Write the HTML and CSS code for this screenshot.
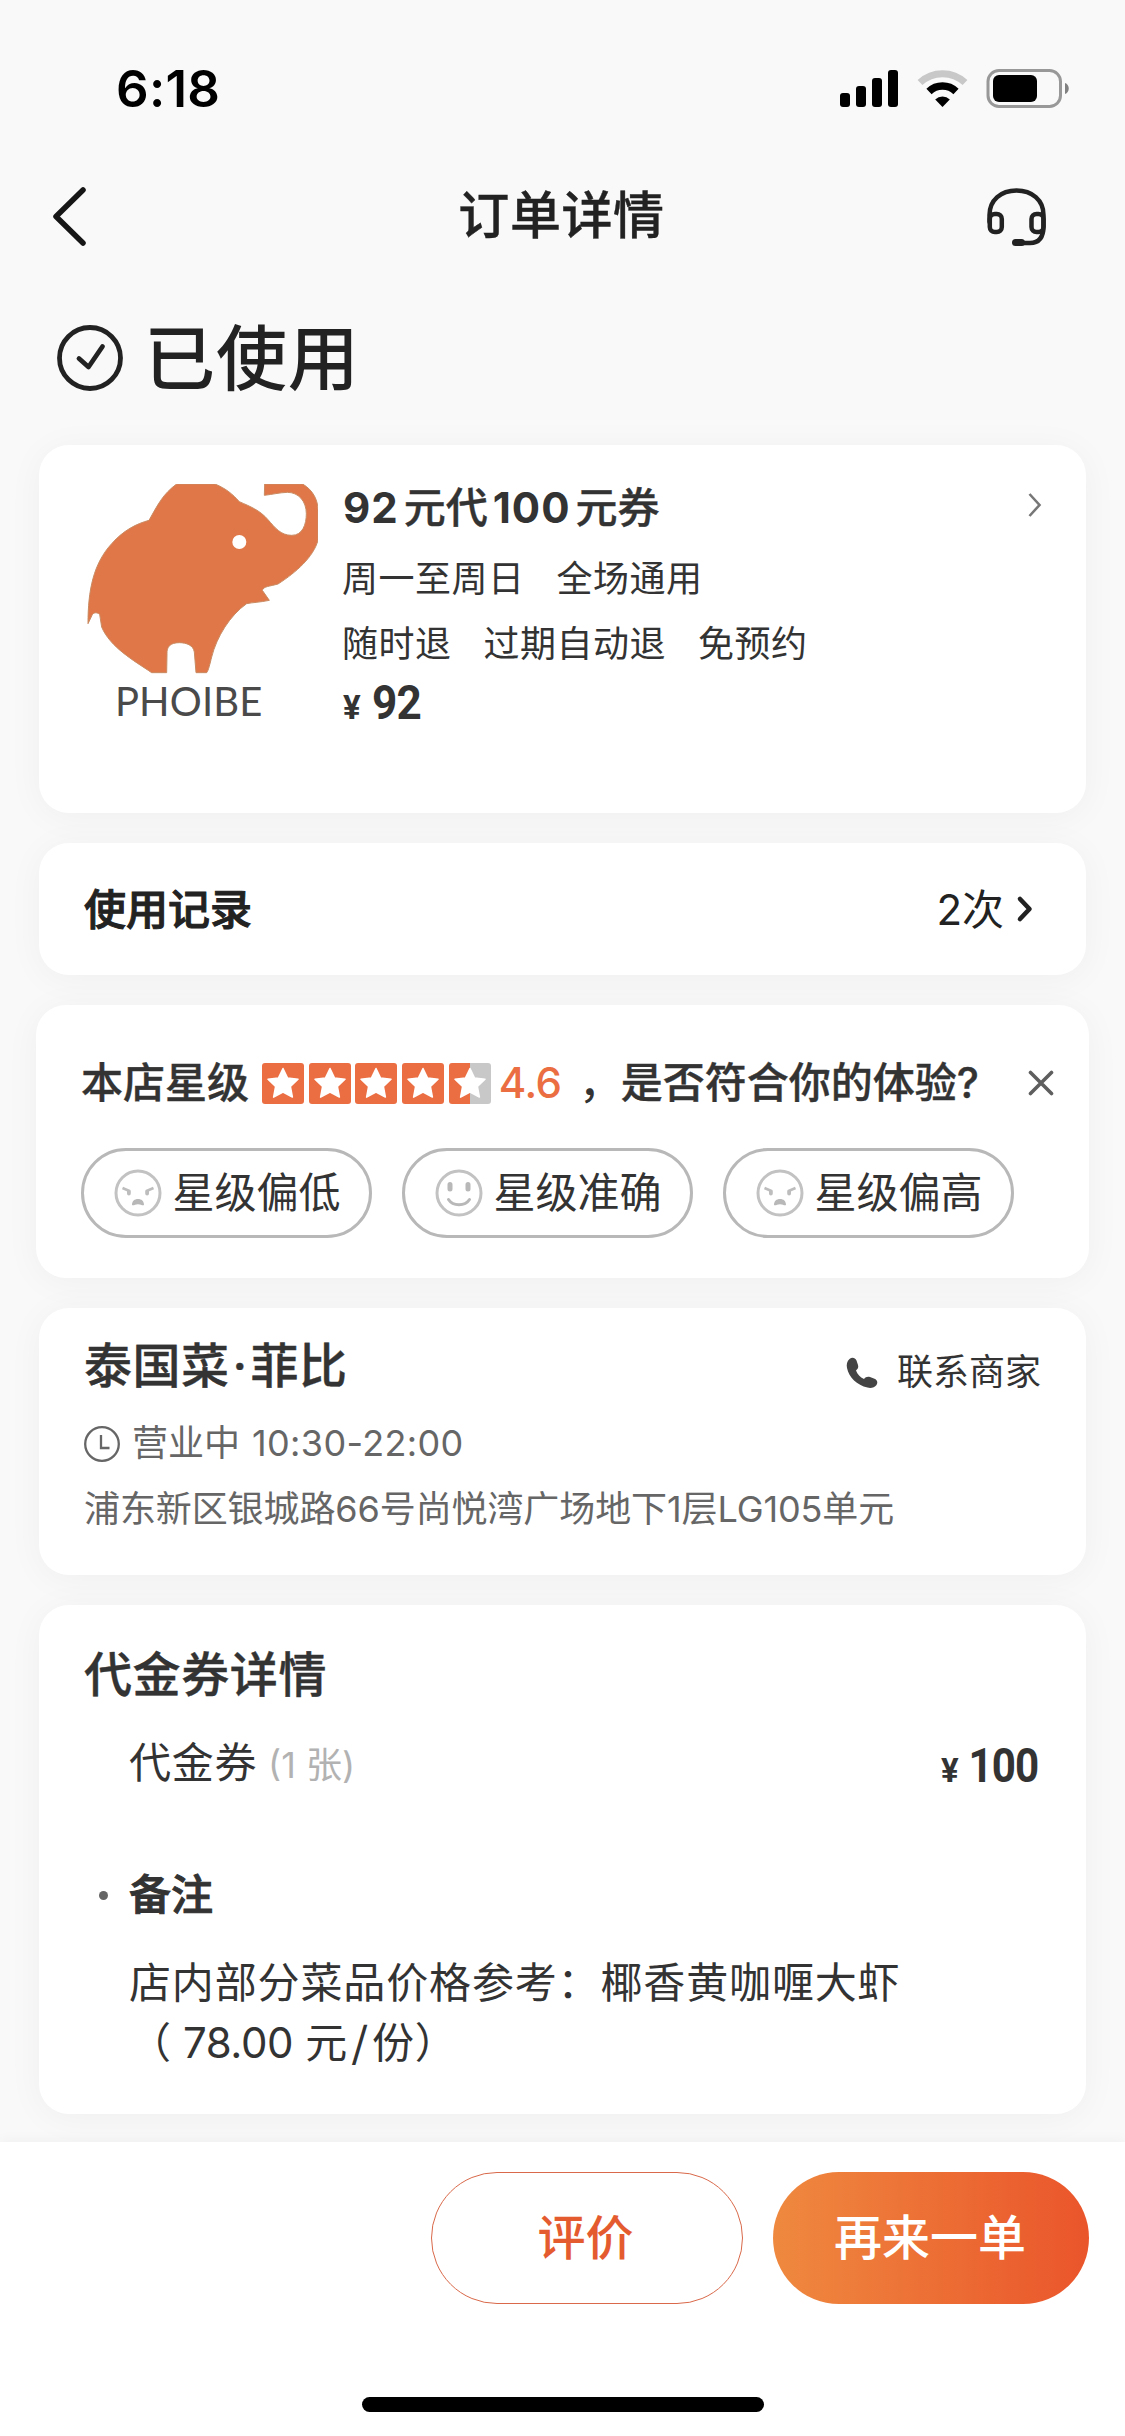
FILE: index.html
```html
<!DOCTYPE html>
<html lang="zh-CN">
<head>
<meta charset="utf-8">
<title>订单详情</title>
<link rel="stylesheet" href="styles.css">
</head>
<body>
<svg class="defs" width="0" height="0">
  <symbol id="star" viewBox="0 0 42 41"><path fill="#fff" stroke="#fff" stroke-width="1.5" stroke-linejoin="round" d="M21 5.500l4.600 9.600 10.400 1.200-7.600 7.200 2 10.600L21 29l-9.400 5.100 2-10.600L6 16.300l10.400-1.200z"/></symbol>
  <symbol id="sad" viewBox="0 0 48 48">
    <circle cx="24" cy="24" r="22" fill="none" stroke="#c2c2c2" stroke-width="3"/>
    <path d="M8.500 19l7.500 3.200M39.500 19L32 22.200" stroke="#bdbdbd" stroke-width="2.600" fill="none"/>
    <path d="M13 21.500h3.800v3a1.900 1.900 0 0 1-3.800 0zM31.200 21.500H35v3a1.900 1.900 0 0 1-3.800 0z" fill="#bdbdbd"/>
    <path d="M18 36c0-4 2.500-6 6-6s6 2 6 6c-1.500 1-3-.8-6-.8s-4.500 1.800-6 .8z" fill="#b8b8b8"/>
  </symbol>
  <symbol id="smile" viewBox="0 0 48 48">
    <circle cx="24" cy="24" r="22" fill="none" stroke="#c2c2c2" stroke-width="3"/>
    <path d="M15 15.500v4.500M33 15.500v4.500" stroke="#b8b8b8" stroke-width="5" stroke-linecap="round"/>
    <path d="M13.500 30.500c4.500 7 16.500 7 21 0" fill="none" stroke="#b8b8b8" stroke-width="3" stroke-linecap="round"/>
  </symbol>
</svg>

<header class="status">
  <div class="clock">6:18</div>
  <svg class="status-icons" width="230" height="40" viewBox="0 0 230 40">
    <rect x="0" y="25" width="10" height="14" rx="3"/><rect x="16" y="18" width="10" height="21" rx="3"/>
    <rect x="32" y="10" width="10" height="29" rx="3"/><rect x="48" y="2" width="10" height="37" rx="3"/>
    <path d="M80 14.500a33 33 0 0 1 45 0" fill="none" stroke="#c8c8c8" stroke-width="7"/>
    <path d="M89 23.500a19.500 19.500 0 0 1 27 0" fill="none" stroke="#000" stroke-width="7.500"/>
    <path d="M102.500 39l-7.300-7.600a10.500 10.500 0 0 1 14.600 0z"/>
    <rect x="148" y="2.500" width="72.500" height="36" rx="11" fill="none" stroke="#989898" stroke-width="3"/>
    <rect x="153" y="7" width="44" height="27" rx="6"/>
    <path d="M225 15c5 1.500 5 9.500 0 11z" fill="#808080"/>
  </svg>
</header>

<nav class="navbar">
  <svg width="36" height="60" viewBox="0 0 36 60"><path d="M33 4L6 30.500 33 57" fill="none" stroke="#161616" stroke-width="5.500" stroke-linecap="round" stroke-linejoin="round"/></svg>
  <h1>订单详情</h1>
  <svg width="60" height="60" viewBox="0 0 60 60" fill="none" stroke="#222" stroke-width="4.500" stroke-linecap="round">
    <path d="M2.500 36V29C2.500 14 14 4.500 29.500 4.500S56.500 14 56.500 29v11C56.500 51 52 57 43 57H30"/>
    <rect x="2.800" y="28" width="12" height="18" rx="5"/>
    <rect x="44.500" y="28" width="12" height="18" rx="5"/>
    <path d="M28.500 56.500h6" stroke-width="7"/>
  </svg>
</nav>

<section class="state">
  <svg width="68" height="68" viewBox="0 0 68 68" fill="none" stroke="#222" stroke-width="4.800" stroke-linecap="round" stroke-linejoin="round"><circle cx="34" cy="34" r="30.500"/><path d="M23 34.500L32.500 43 46.500 22.500"/></svg>
  <h2>已使用</h2>
</section>

<main>
  <section class="card deal">
    <div class="logo">
      <svg width="234" height="190" viewBox="162 161 702 570">
        <path fill="#e07748" stroke="#c98b62" stroke-width="3" d="M440 161H555C590 176 606 190 628 214C660 228 690 240 714 268C735 292 752 315 785 315C818 315 829 282 829 250C829 212 805 186 772 186C748 187 728 192 703 195L704 161H818C850 180 864 210 864 240V330C850 380 800 425 744 461C720 468 700 468 697 480L718 510C690 516 670 516 650 520C600 555 560 620 545 680C540 700 535 722 530 727H498L493 665C490 645 470 637 448 637C420 637 410 650 411 670L410 727H365C310 690 240 650 215 590L209 552C200 545 190 546 186 555L174 580C174 480 190 400 245 340C280 300 320 280 357 270C385 220 400 190 440 161Z"/>
        <circle cx="628" cy="335" r="21" fill="#fff"/>
      </svg>
      <div class="logo-name">PHOIBE</div>
    </div>
    <div class="deal-info">
      <h3><b>92</b>元代<b>100</b>元券</h3>
      <p><span>周一至周日</span><span>全场通用</span></p>
      <p><span>随时退</span><span>过期自动退</span><span>免预约</span></p>
      <div class="price"><i>¥</i><span>92</span></div>
    </div>
    <svg class="deal-arrow" width="14" height="28" viewBox="0 0 14 28"><path d="M1.500 3L11.500 14 1.500 25" fill="none" stroke="#777" stroke-width="2.600"/></svg>
  </section>

  <section class="card usage">
    <h3>使用记录</h3>
    <span>2次</span>
    <svg width="18" height="28" viewBox="0 0 18 28"><path d="M4 4L13.500 14 4 24" fill="none" stroke="#222" stroke-width="4.600" stroke-linecap="round" stroke-linejoin="round"/></svg>
  </section>

  <section class="card rating">
    <div class="rating-head">
      <h3>本店星级</h3>
      <div class="stars">
        <svg><use href="#star"/></svg><svg><use href="#star"/></svg><svg><use href="#star"/></svg><svg><use href="#star"/></svg><svg class="half"><use href="#star"/></svg>
      </div>
      <span class="score">4.6</span>
      <span class="comma">，</span>
      <h3>是否符合你的体验?</h3>
      <svg class="close" width="26" height="26" viewBox="0 0 26 26"><path d="M2.500 2.500l21 21M23.500 2.500l-21 21" stroke="#5e5e5e" stroke-width="3.600" stroke-linecap="round"/></svg>
    </div>
    <div class="pills">
      <button><svg><use href="#sad"/></svg>星级偏低</button>
      <button><svg><use href="#smile"/></svg>星级准确</button>
      <button><svg><use href="#sad"/></svg>星级偏高</button>
    </div>
  </section>

  <section class="card shop">
    <div class="shop-head">
      <h3>泰国菜<em>·</em>菲比</h3>
      <a><svg width="32" height="32" viewBox="0 0 32 32"><path fill="#444" d="M3.500 2C6 0 9 .5 10.500 3.500L12 8c.8 2.500-.3 4-2 5.500 1.500 4 4 6.500 8 8.500 1.500-2 3.500-2.700 6-2l4.500 1.800c3 1.500 3.500 4 2 6.200-2 2.600-5.500 3.500-9 2.600C11 28 3 20.500 1 11 .3 7.500 1 4 3.500 2z"/></svg>联系商家</a>
    </div>
    <div class="hours">
      <svg width="38" height="38" viewBox="0 0 38 38" fill="none" stroke="#666" stroke-width="2.300"><circle cx="19" cy="19" r="16.800"/><path d="M18 10v13h8.500"/></svg>
      <span>营业中</span><span>10:30-22:00</span>
    </div>
    <p>浦东新区银城路66号尚悦湾广场地下1层LG105单元</p>
  </section>

  <section class="card voucher">
    <h3>代金券详情</h3>
    <div class="line"><span class="name">代金券</span><span class="count">(1 张)</span><div class="price"><i>¥</i><span>100</span></div></div>
    <h4>备注</h4>
    <p>店内部分菜品价格参考：椰香黄咖喱大虾<br>（<span class="amount">78.00</span>元<span class="slash">/</span>份）</p>
  </section>
</main>

<footer>
  <div class="actions"><button class="review">评价</button><button class="again">再来一单</button></div>
  <div class="home"></div>
</footer>
</body>
</html>
```
FILE: styles.css
```css
* { box-sizing: border-box; margin: 0; padding: 0; }
body { width: 1125px; height: 2436px; overflow: hidden; display: flex; flex-direction: column; background: #f9f9f9; color: #333; font-family: Inter, "Noto Sans CJK SC", sans-serif; font-size: 42px; line-height: 1.2; }
svg { display: block; flex: none; }
.defs { position: absolute; }
h1, h2, h3, h4 { font-weight: 500; font-size: 42px; white-space: nowrap; -webkit-text-stroke: .4px currentColor; }
button { font: inherit; color: inherit; background: none; border: 0; display: flex; align-items: center; justify-content: center; white-space: nowrap; }
i, em { font-style: normal; }

.status { height: 140px; flex: none; display: flex; justify-content: space-between; align-items: flex-start; padding: 60px 55px 0 116px; color: #000; }
.clock { font-size: 51px; font-weight: 600; line-height: 58px; letter-spacing: .3px; }
.status-icons { margin-top: 8px; }
.navbar { height: 152px; flex: none; display: flex; align-items: center; justify-content: space-between; padding: 0 78px 0 50px; }
.navbar h1 { font-size: 51px; letter-spacing: .6px; color: #222; margin-left: 50px; }
.state { height: 153px; flex: none; display: flex; align-items: center; padding: 0 0 22px 56px; gap: 20px; color: #222; }
.state h2 { font-size: 71px; line-height: 90px; letter-spacing: .9px; -webkit-text-stroke: 0; }

main { padding: 0 36px; flex: none; height: 1697px; }
.card { background: #fff; border-radius: 30px; margin: 0 3px 30px; box-shadow: 0 4px 36px rgba(0, 0, 0, .045); }

.deal { height: 368px; padding: 39px 44px 0 45px; display: flex; align-items: flex-start; }
.logo { width: 234px; flex: none; display: flex; flex-direction: column; }
.logo-name { font-family: Lato, sans-serif; font-weight: 400; font-size: 40px; line-height: 50px; color: #4a4a4a; margin: 2px 0 0 31px; letter-spacing: .1px; }
.deal-info { flex: 1; margin-left: 24px; display: flex; flex-direction: column; }
.deal h3 { line-height: 48px; margin-left: 1px; }
.deal h3 b { font-weight: 700; letter-spacing: 1px; margin-right: 5px; -webkit-text-stroke: 0; }
.deal h3 b + b { margin-left: 5px; }
.deal p { font-size: 36px; letter-spacing: .5px; line-height: 40px; display: flex; gap: 32px; margin-top: 27px; }
.deal p + p { margin-top: 25px; }
.price { font-family: Roboto, sans-serif; font-weight: 700; font-size: 49px; line-height: 44px; letter-spacing: -1px; display: flex; align-items: baseline; }
.price span { transform: scaleX(.9); transform-origin: left; }
.price i { font-size: 33px; margin-right: 12px; }
.deal .price { margin: 17px 0 0 1px; }
.deal-arrow { margin-top: 7px; }

.usage { height: 132px; padding: 3px 52px 0 45px; display: flex; align-items: center; color: #222; }
.usage h3 { flex: 1; -webkit-text-stroke: 1px currentColor; }
.usage svg { margin: -3px 0 0 12px; }

.rating { height: 273px; margin: 0 0 30px; padding: 53px 35px 0 45px; }
.rating-head { display: flex; align-items: center; height: 50px; }
.stars { display: flex; gap: 4.700px; margin-left: 13px; }
.stars svg { width: 42px; height: 41px; background: #eb6e42; border-radius: 3px; }
.stars .half { background: linear-gradient(90deg, #eb6e42 50%, #c8c8c8 50%); }
.score { color: #eb6e42; font-weight: 500; margin-left: 8px; width: 62px; letter-spacing: -.5px; }
.comma { font-weight: 500; width: 42px; margin-left: 18px; }
.close { margin-left: auto; }
.pills { display: flex; gap: 30px; margin-top: 40px; }
.pills button { width: 291px; height: 90px; border: 3px solid #b8b8b8; border-radius: 45px; }
.pills svg { width: 48px; height: 48px; margin: 0 10px 0 2px; }

.shop { height: 267px; padding: 31px 45px 0 45px; }
.shop-head { display: flex; justify-content: space-between; height: 60px; }
.shop h3 { font-size: 48px; line-height: 54px; letter-spacing: .5px; }
.shop em { display: inline-block; width: 21px; text-align: center; }
.shop a { display: flex; align-items: center; font-size: 36px; height: 68px; gap: 19px; }
.hours { display: flex; align-items: center; height: 44px; margin: 23px 0 0 -1px; font-size: 36px; color: #666; }
.hours svg { margin-right: 11px; }
.hours span + span { margin-left: 12px; letter-spacing: .35px; }
.shop p { font-size: 36px; color: #666; line-height: 44px; margin-top: 21px; white-space: nowrap; letter-spacing: -.1px; }

.voucher { height: 509px; margin-bottom: 0; padding: 40px 48px 0 45px; }
.voucher h3 { font-size: 48px; letter-spacing: .6px; line-height: 60px; }
.line { display: flex; align-items: center; height: 50px; margin: 33px 0 0 45px; }
.line .name { letter-spacing: .7px; }
.line .count { font-size: 36px; color: #b2b2b2; margin: 6px auto 0 11px; }
.line .price { margin-top: 10px; }
.line .price span { transform: scaleX(.86); transform-origin: right; }
.line .price i { margin-right: -1px; }
.voucher h4 { line-height: 60px; margin-top: 77px; display: flex; align-items: center; -webkit-text-stroke: 1px currentColor; }
.voucher h4::before { content: ""; width: 9px; height: 9px; border-radius: 50%; background: #666; margin: 0 21px 0 15px; }
.voucher p { margin: 28px 0 0 45px; line-height: 60px; letter-spacing: .86px; white-space: nowrap; }
.amount { letter-spacing: -.4px; margin: 0 12px 0 11px; }
.slash { display: inline-block; margin: 0 4px; transform: skewX(-3deg) scaleY(1.1); }

footer { flex: 1; background: #fff; box-shadow: 0 -2px 12px rgba(0, 0, 0, .04); padding: 30px 36px 0; }
.actions { display: flex; justify-content: flex-end; gap: 30px; }
.actions button { height: 132px; border-radius: 66px; font-size: 48px; font-weight: 500; padding-bottom: 1px; }
.actions .review { width: 312px; border: 1.500px solid #d9694a; color: #e55b30; padding-right: 3px; }
.actions .again { width: 316px; background: linear-gradient(90deg, #ef893f, #ea552b); color: #fff; padding-right: 2px; }
.home { width: 402px; height: 15px; border-radius: 8px; background: #000; margin: 93px auto 0; }
```
